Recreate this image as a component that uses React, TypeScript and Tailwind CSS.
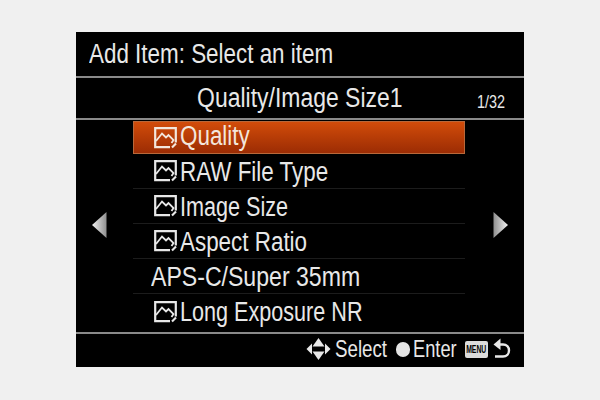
import type { ReactNode } from "react";

const items = [
  { label: "Quality", icon: true, active: true, fit: "scale-x-[0.83]" },
  { label: "RAW File Type", icon: true, fit: "scale-x-[0.83]" },
  { label: "Image Size", icon: true, fit: "scale-x-[0.8]" },
  { label: "Aspect Ratio", icon: true, fit: "scale-x-[0.83]" },
  { label: "APS-C/Super 35mm", icon: false, fit: "scale-x-[0.855]" },
  { label: "Long Exposure NR", icon: true, fit: "scale-x-[0.8]" },
];

// the camera font is a narrow grotesque, so squeeze Liberation Sans
function Narrow({ children, className = "" }: { children: ReactNode; className?: string }) {
  return <span className={`inline-block whitespace-nowrap ${className}`}>{children}</span>;
}

function StillIcon() {
  return (
    <svg width="23" height="22" viewBox="0 0 23 22" fill="none" stroke="currentColor" className="shrink-0">
      <path d="M16 20.2H1.2V1.2H21.8V15.5" strokeWidth="2.2" />
      <path d="M2 14L8 6.5L12 10.5L14.5 8L19.5 13L17.5 16" strokeWidth="1.8" />
      <path d="M18 20.5L22 16.5" strokeWidth="2.2" />
    </svg>
  );
}

function Arrow({ dir, id }: { dir: "left" | "right"; id: string }) {
  return (
    <svg width="15" height="26" viewBox="0 0 15 26">
      <defs>
        <linearGradient id={id} x1={dir === "left" ? "1" : "0"} x2={dir === "left" ? "0" : "1"} y1="0" y2="0">
          <stop offset="0" stopColor="#8f8f8f" />
          <stop offset="1" stopColor="#f2f2f2" />
        </linearGradient>
      </defs>
      <path d={dir === "left" ? "M14.5 0V26L0 13Z" : "M0.5 0V26L15 13Z"} fill={`url(#${id})`} />
    </svg>
  );
}

export default function App() {
  return (
    <div
      className="h-[400px] w-[600px] bg-[#f0f0f0] pt-[32px] text-[#e8e8e8]"
      style={{ fontFamily: "'Liberation Sans', Arial, sans-serif" }}
    >
      <div className="mx-auto flex h-[335px] w-[448px] flex-col bg-black">
        <div className="flex h-[46px] items-center border-b-2 border-[#8a8a8a] pl-[13px] text-[27px]">
          <Narrow className="origin-left scale-x-[0.83]">Add Item: Select an item</Narrow>
        </div>
        <div className="relative flex h-[42px] items-center justify-center border-b-2 border-[#8a8a8a] text-[27px]">
          <Narrow className="origin-center scale-x-[0.85]">Quality/Image Size1</Narrow>
          <Narrow className="absolute right-[12px] top-[11px] origin-left scale-x-[0.8] text-[18px]">1/32</Narrow>
        </div>

        <div className="flex h-[212px] shrink-0 items-center">
          <div className="flex w-[57px] pb-[2px] pl-[16px]">
            <Arrow dir="left" id="arrow-left" />
          </div>
          <div className="w-[332px] self-start">
            {items.map((item) =>
              item.active ? (
                <div
                  key={item.label}
                  className="mt-[1px] flex h-[33px] items-center gap-[3px] border border-[#b8683a] bg-gradient-to-b from-[#d24c0a] to-[#9c2c04] pl-[20px] text-[27px] text-[#f3e6dc]"
                >
                  <StillIcon />
                  <Narrow className={`mb-[2px] origin-left ${item.fit}`}>{item.label}</Narrow>
                </div>
              ) : (
                <div
                  key={item.label}
                  className={`flex h-[35px] items-center gap-[3px] border-b border-[#1c1c1c] text-[27px] last:border-b-0 ${
                    item.icon ? "pl-[21px]" : "pl-[18px]"
                  }`}
                >
                  {item.icon && <StillIcon />}
                  <Narrow className={`mt-[2px] origin-left ${item.fit}`}>{item.label}</Narrow>
                </div>
              ),
            )}
          </div>
          <div className="flex w-[59px] pb-[2px] pl-[28px]">
            <Arrow dir="right" id="arrow-right" />
          </div>
        </div>

        <div className="flex min-h-0 flex-1 items-center justify-end border-t-2 border-[#8a8a8a] pb-[3px] pr-[13px] text-[24px] leading-none">
          <svg width="25" height="24" viewBox="0 0 25 24" fill="#e8e8e8">
            <path d="M6 6.5V17.5L0.5 12Z" />
            <path d="M19 6.5V17.5L24.5 12Z" />
            <path d="M12.5 1L18.5 9.5H6.5Z" />
            <path d="M12.5 23L18.5 14.5H6.5Z" />
          </svg>
          <span className="ml-[4px] w-[52px]">
            <Narrow className="origin-left scale-x-[0.78]">Select</Narrow>
          </span>
          <span className="ml-[9px] h-[15px] w-[14px] rounded-full bg-[#e4e4e4]" />
          <span className="ml-[3px] w-[44px]">
            <Narrow className="origin-left scale-x-[0.76]">Enter</Narrow>
          </span>
          <span className="ml-[8px] flex h-[17px] w-[23px] items-center justify-center overflow-hidden rounded-[2px] bg-[#dcdcdc] text-black">
            <span className="scale-x-[0.62] text-[11px] font-bold leading-none">MENU</span>
          </span>
          <svg width="18" height="22" viewBox="0 0 18 22" fill="none" className="ml-[5px]">
            <path d="M2 18.5H10C13.5 18.5 16 16 16 12.5C16 9 13.5 6.5 10 6.5H6" stroke="#e8e8e8" strokeWidth="2.4" />
            <path d="M7.5 0.5V12L0.5 6.5Z" fill="#e8e8e8" />
          </svg>
        </div>
      </div>
    </div>
  );
}
